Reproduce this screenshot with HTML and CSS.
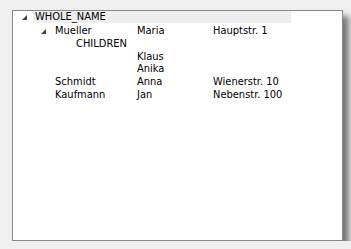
FILE: index.html
```html
<!DOCTYPE html>
<html lang="de">
<head>
    <meta charset="UTF-8">
    <title>Tree</title>
    <link rel="stylesheet" href="styles.css">
</head>
<body>
    <!-- tree list -->
    <div class="tree">
        <div class="row head">
            <span class="toggle"><svg width="5" height="5" viewBox="0 0 5 5"><polygon points="5,0 5,5 0,5" fill="#404040"/></svg></span>
            <span class="head-label">WHOLE_NAME</span>
        </div>

        <div class="row level1">
            <span class="toggle"><svg width="5" height="5" viewBox="0 0 5 5"><polygon points="5,0 5,5 0,5" fill="#404040"/></svg></span>
            <span class="name">Mueller</span>
            <span class="first">Maria</span>
            <span class="street">Hauptstr. 1</span>
        </div>
        <div class="row level2">
            <span class="name">CHILDREN</span>
        </div>
        <div class="row level1">
            <span class="toggle"></span>
            <span class="name"></span>
            <span class="first">Klaus</span>
        </div>
        <div class="row level1">
            <span class="toggle"></span>
            <span class="name"></span>
            <span class="first">Anika</span>
        </div>
        <div class="row level1">
            <span class="toggle"></span>
            <span class="name">Schmidt</span>
            <span class="first">Anna</span>
            <span class="street">Wienerstr. 10</span>
        </div>
        <div class="row level1">
            <span class="toggle"></span>
            <span class="name">Kaufmann</span>
            <span class="first">Jan</span>
            <span class="street">Nebenstr. 100</span>
        </div>
    </div>
</body>
</html>
```

FILE: styles.css
```css
/* base */
body {
    margin: 0;
    background-color: #f0f0f0;
    font-family: "DejaVu Sans Condensed", "DejaVu Sans", sans-serif;
    font-size: 11px;
    color: #000;
}

/* tree box */
.tree {
    box-sizing: border-box;
    width: 331px;
    height: 231px;
    margin: 10px 0 0 12px;
    background-color: #fff;
    border: 1px solid #84888f;
    box-shadow: 6px 6px 6px rgba(0, 0, 0, 0.5);
}

.row {
    display: flex;
    align-items: center;
    height: 12.8px;
    line-height: 12.8px;
    white-space: nowrap;
}

.toggle {
    display: flex;
    align-items: center;
    height: 100%;
}
.toggle svg {
    margin-top: 1px;
}

/* header row */
.row.head {
    height: 12px;
    line-height: 12px;
    margin-bottom: 2px;
    padding-left: 9px;
}
.row.head .toggle {
    width: 11px;
}
.head-label {
    width: 256px;
    padding-left: 2px;
    background-color: #eeeeee;
}

/* child rows */
.row.level1 {
    padding-left: 28px;
}
.row.level1 .toggle {
    width: 14px;
}
.row.level1 .name {
    width: 82px;
}
.row.level2 {
    padding-left: 63px;
}
.first {
    width: 76px;
}
```
